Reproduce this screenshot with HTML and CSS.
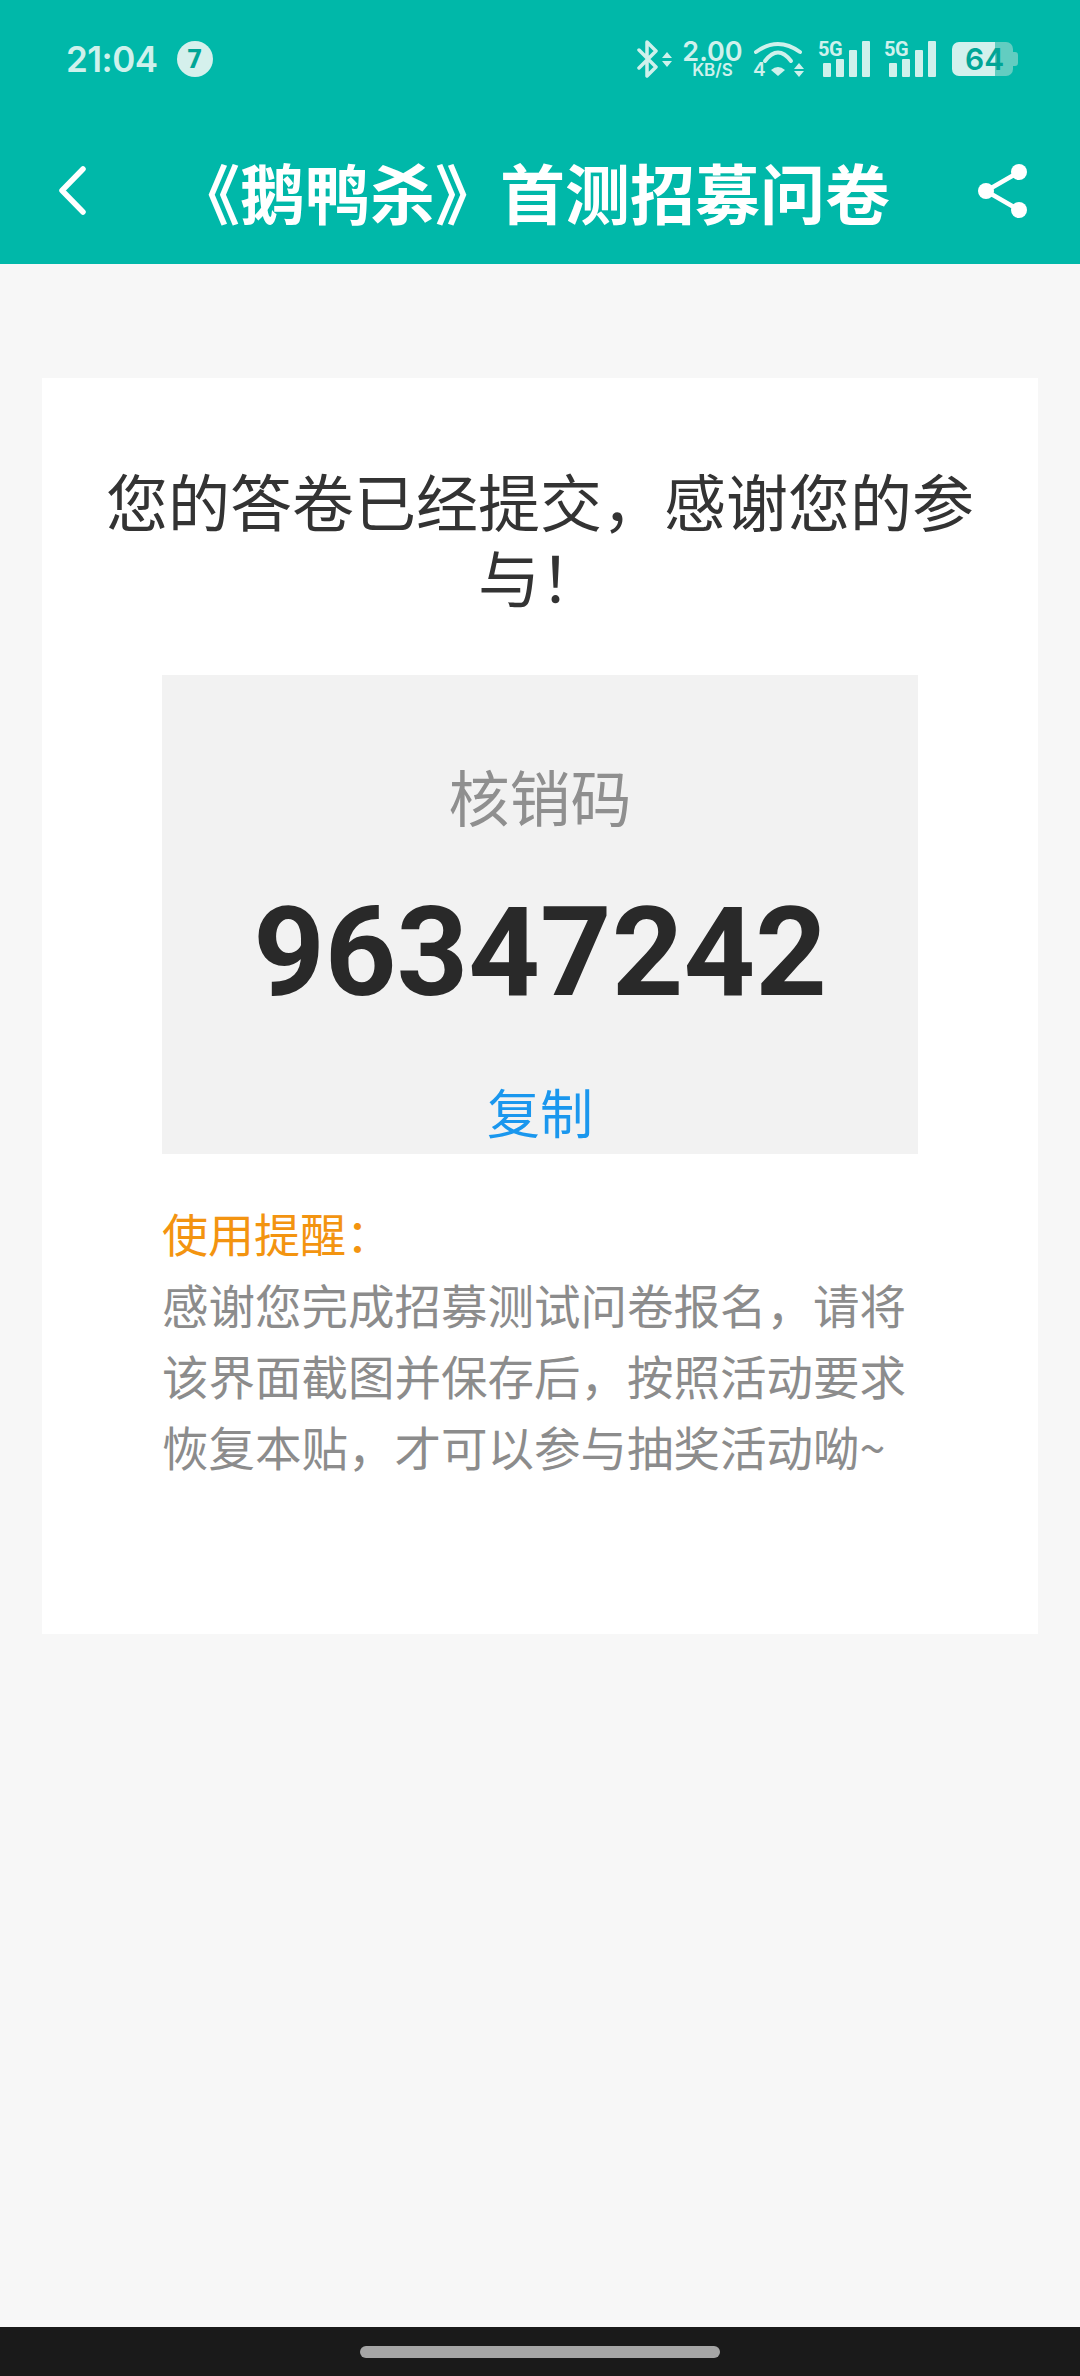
FILE: index.html
```html
<!DOCTYPE html>
<html lang="zh-CN">
<head>
<meta charset="utf-8">
<title>《鹅鸭杀》首测招募问卷</title>
<link rel="stylesheet" href="styles.css">
</head>
<body>
<div class="phone">
  <header class="header">
    <div class="status">
      <div class="status-left">
        <span class="time">21:04</span>
        <span class="badge">7</span>
      </div>
      <div class="status-right">
        <svg class="ic-bt" viewBox="0 0 36 38" width="36" height="38"><path d="M3 10 L20 27 L11 36 V2 L20 11 L3 28" fill="none" stroke="#cff1ec" stroke-width="3.5" stroke-linecap="round" stroke-linejoin="round"/><path d="M26 18 L31 12 L36 18 Z M26 21 L36 21 L31 27 Z" fill="#cff1ec"/></svg>
        <div class="speed"><span class="speed-num">2.00</span><span class="speed-unit">KB/S</span></div>
        <div class="wifi">
          <svg class="ic-wifi" viewBox="0 0 52 38" width="52" height="38"><path d="M3 12 Q25 -4 47 12" fill="none" stroke="#cff1ec" stroke-width="4" stroke-linecap="round"/><path d="M12 21 Q25 4 38 21" fill="none" stroke="#cff1ec" stroke-width="4" stroke-linecap="round"/><path d="M18 30 Q25 24 32 30 L25 36 Z" fill="#cff1ec"/><path d="M41 29 L46 23 L51 29 Z M41 31 L51 31 L46 37 Z" fill="#cff1ec"/></svg>
          <span class="wifi-four">4</span>
        </div>
        <div class="signal"><span class="net">5G</span><span class="bars"><i class="bar b1"></i><i class="bar b2"></i><i class="bar b3"></i><i class="bar b4"></i></span></div>
        <div class="signal"><span class="net">5G</span><span class="bars"><i class="bar b1"></i><i class="bar b2"></i><i class="bar b3"></i><i class="bar b4"></i></span></div>
        <div class="battery"><span class="bat-level">64</span><i class="bat-cap"></i></div>
      </div>
    </div>
    <div class="navbar">
      <svg class="ic-back" viewBox="0 0 30 52" width="30" height="52"><path d="M25 4 L4 25.500 L25 47" fill="none" stroke="#fff" stroke-width="5.500" stroke-linecap="round" stroke-linejoin="round"/></svg>
      <h1 class="title">《鹅鸭杀》首测招募问卷</h1>
      <svg class="ic-share" viewBox="0 0 49 54" width="49" height="54"><path d="M41 8 L8 27 L41 46" fill="none" stroke="#fff" stroke-width="4.500"/><circle cx="41" cy="8" r="8" fill="#fff"/><circle cx="8" cy="27" r="8" fill="#fff"/><circle cx="41" cy="46" r="8" fill="#fff"/></svg>
    </div>
  </header>
  <main class="main">
    <section class="card">
      <h2 class="message">您的答卷已经提交，感谢您的参与！</h2>
      <div class="code-box">
        <div class="code-label">核销码</div>
        <div class="code-num">96347242</div>
        <div class="code-copy">复制</div>
      </div>
      <div class="tips">
        <div class="tips-head">使用提醒：</div>
        <p class="tips-body">感谢您完成招募测试问卷报名，请将该界面截图并保存后，按照活动要求恢复本贴，才可以参与抽奖活动呦~</p>
      </div>
    </section>
  </main>
  <footer class="navfoot"><span class="pill"></span></footer>
</div>
</body>
</html>
```
FILE: styles.css
```css
* { box-sizing: border-box; }
html, body { margin: 0; padding: 0; }
body { font-family: "Noto Sans CJK SC", "Noto Sans", sans-serif; background: #f7f7f7; }
.phone { width: 1080px; height: 2376px; display: flex; flex-direction: column; background: #f7f7f7; overflow: hidden; }
.header { height: 264px; background: #00b8a9; flex: none; }
.status { height: 118px; display: flex; justify-content: space-between; align-items: center; padding: 0 62px 0 66px; }
.status-left { display: flex; align-items: center; gap: 19px; }
.time { font-family: Inter, Roboto, sans-serif; font-weight: 600; font-size: 35px; color: #cff1ec; letter-spacing: -0.5px; }
.badge { width: 36px; height: 36px; border-radius: 50%; background: #d5f0ec; color: #00a596; font-family: Roboto, sans-serif; font-weight: 900; font-size: 25px; display: flex; align-items: center; justify-content: center; }
.status-right { display: flex; align-items: center; gap: 11px; }
.speed { display: flex; flex-direction: column; align-items: center; color: #cff1ec; font-family: Inter, Roboto, sans-serif; font-weight: 600; width: 59px; }
.speed-num { font-size: 27px; line-height: 23px; }
.speed-unit { font-size: 17px; line-height: 15px; }
.wifi { position: relative; width: 52px; height: 38px; margin-right: 2px; }
.ic-wifi { display: block; }
.wifi-four { position: absolute; left: 0; bottom: -2px; font-family: Inter, Roboto, sans-serif; font-size: 19px; line-height: 20px; font-weight: 600; color: #cff1ec; }
.signal { position: relative; width: 52px; height: 38px; }
.signal + .signal { margin-left: 3px; margin-right: 5px; }
.net { position: absolute; left: 0; top: -1px; font-family: Roboto, sans-serif; font-weight: 700; font-size: 20px; color: #cff1ec; line-height: 20px; letter-spacing: -0.5px; }
.bars { position: absolute; inset: 0; display: flex; align-items: flex-end; justify-content: flex-end; gap: 5px; padding-bottom: 1px; }
.bar { display: block; width: 8px; background: #cff1ec; border-radius: 1px; }
.b1 { height: 14px; }
.b2 { height: 18px; }
.b3 { height: 27px; }
.b4 { height: 36px; }
.battery { position: relative; width: 61px; height: 34px; margin-right: 5px; border-radius: 7px; background: linear-gradient(90deg, #d3f1ed 0 43px, #62cdc1 43px); display: flex; align-items: center; padding-left: 13px; }
.bat-level { font-family: Inter, Roboto, sans-serif; font-weight: 600; font-size: 30px; line-height: 30px; color: #00a596; }
.bat-cap { position: absolute; right: -5px; top: 10px; width: 5px; height: 14px; background: #62cdc1; border-radius: 0 3px 3px 0; }
.navbar { height: 146px; display: flex; align-items: center; padding: 0 53px 0 58px; }
.title { margin: 0 0 0 87px; flex: 1; font-size: 65px; font-weight: 700; color: #fff; line-height: 90px; white-space: nowrap; }
.main { flex: 1; padding: 114px 42px 0; }
.card { background: #fff; height: 1256px; padding: 84px 0 0; display: flex; flex-direction: column; align-items: center; }
.message { margin: 0; width: 870px; font-size: 62px; font-weight: 400; line-height: 76px; color: #333; text-align: center; }
.code-box { margin-top: 61px; width: 756px; height: 479px; background: #f2f2f2; display: flex; flex-direction: column; align-items: center; }
.code-label { margin-top: 79px; font-size: 61px; line-height: 84px; color: #8f8f8f; }
.code-num { margin-top: 42px; font-family: Roboto, sans-serif; font-weight: 700; font-size: 125px; line-height: 146px; color: #292929; }
.code-copy { margin-top: 49px; font-size: 53px; line-height: 72px; color: #1a97ee; }
.tips { width: 756px; margin-top: 42px; }
.tips-head { font-size: 46px; line-height: 72px; color: #f39410; }
.tips-body { margin: 0; font-size: 46.5px; line-height: 71px; color: #8c8c8c; }
.navfoot { height: 49px; background: #1a1a1a; flex: none; display: flex; align-items: center; justify-content: center; }
.pill { width: 360px; height: 12px; border-radius: 6px; background: #a6a6a6; }
```
